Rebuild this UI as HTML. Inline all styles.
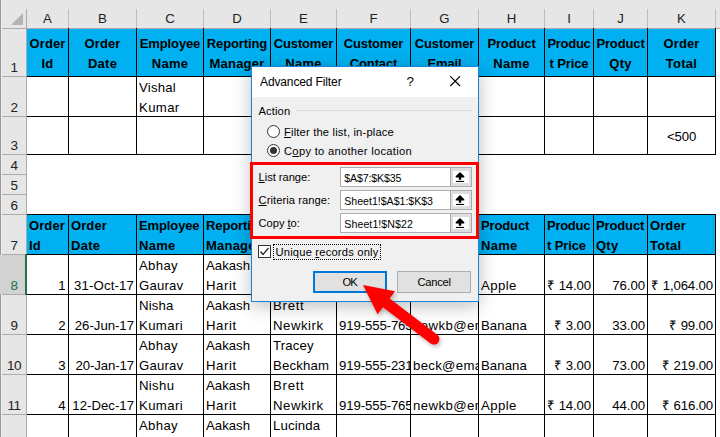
<!DOCTYPE html><html><head><meta charset="utf-8"><title>Advanced Filter</title><style>

html,body{margin:0;padding:0;}
body{width:720px;height:437px;overflow:hidden;background:#fff;position:relative;font-family:"Liberation Sans",sans-serif;font-size:13px;color:#000;}
.abs,.c,.l,.ch,.rh{position:absolute;}
.l{background:#000;}
.c{box-sizing:border-box;overflow:hidden;white-space:nowrap;line-height:20px;font-size:13.2px;}
.c span{position:absolute;left:2px;right:2px;bottom:-2px;display:block;}
.b span{bottom:-1.5px;}
.h1 span{bottom:2px;}
.mid span{bottom:7px;}
.c i{display:block;font-style:normal;}
.b{font-weight:bold;font-size:13px;}
.ctr span{text-align:center;}
.r span{text-align:right;}
.ch{top:8px;height:19px;line-height:21px;text-align:center;font-size:13.2px;color:#222;}
.rh{left:0;width:26px;text-align:center;font-size:13.5px;color:#222;line-height:20px;}
.rh span{position:absolute;left:2px;right:0;bottom:-2px;letter-spacing:-0.4px;}
.g{position:absolute;background:#ababab;}
.gc{background:#bdbdbd;}
.dlg{position:absolute;font-size:12px;color:#000;}
.dlg .t{position:absolute;white-space:nowrap;line-height:14px;}
u{text-decoration:underline;text-underline-offset:1px;}

</style></head><body>
<div class="abs" style="left:0;top:0;width:720px;height:29px;background:#e6e6e6"></div>
<div class="abs" style="left:0;top:0;width:27px;height:437px;background:#e6e6e6"></div>
<div class="abs" style="left:0;top:0;width:1px;height:437px;background:#999999"></div>
<div class="abs" style="left:1px;top:0;width:1px;height:437px;background:#f0f0f0"></div>
<svg class="abs" style="left:11px;top:13px" width="13" height="13"><polygon points="12,0 12,12 0,12" fill="#b4b4b4"/></svg>
<div class="ch" style="left:27px;width:41px">A</div>
<div class="ch" style="left:69px;width:67px">B</div>
<div class="ch" style="left:137px;width:66px">C</div>
<div class="ch" style="left:204px;width:66px">D</div>
<div class="ch" style="left:271px;width:65px">E</div>
<div class="ch" style="left:337px;width:73px">F</div>
<div class="ch" style="left:411px;width:67px">G</div>
<div class="ch" style="left:479px;width:65px">H</div>
<div class="ch" style="left:545px;width:48px">I</div>
<div class="ch" style="left:594px;width:53px">J</div>
<div class="ch" style="left:648px;width:67px">K</div>
<div class="g gc" style="left:26px;top:9px;width:1px;height:19px"></div>
<div class="g gc" style="left:68px;top:9px;width:1px;height:19px"></div>
<div class="g gc" style="left:136px;top:9px;width:1px;height:19px"></div>
<div class="g gc" style="left:203px;top:9px;width:1px;height:19px"></div>
<div class="g gc" style="left:270px;top:9px;width:1px;height:19px"></div>
<div class="g gc" style="left:336px;top:9px;width:1px;height:19px"></div>
<div class="g gc" style="left:410px;top:9px;width:1px;height:19px"></div>
<div class="g gc" style="left:478px;top:9px;width:1px;height:19px"></div>
<div class="g gc" style="left:544px;top:9px;width:1px;height:19px"></div>
<div class="g gc" style="left:593px;top:9px;width:1px;height:19px"></div>
<div class="g gc" style="left:647px;top:9px;width:1px;height:19px"></div>
<div class="g gc" style="left:715px;top:9px;width:1px;height:19px"></div>
<div class="g" style="left:2px;top:28px;width:718px;height:1px"></div>
<div class="rh" style="top:29px;height:47px;"><span>1</span></div>
<div class="g" style="left:2px;top:76px;width:25px;height:1px"></div>
<div class="rh" style="top:77px;height:39px;"><span>2</span></div>
<div class="g" style="left:2px;top:116px;width:25px;height:1px"></div>
<div class="rh" style="top:117px;height:37px;"><span>3</span></div>
<div class="g" style="left:2px;top:154px;width:25px;height:1px"></div>
<div class="rh" style="top:155px;height:19px;"><span>4</span></div>
<div class="g" style="left:2px;top:174px;width:25px;height:1px"></div>
<div class="rh" style="top:175px;height:19px;"><span>5</span></div>
<div class="g" style="left:2px;top:194px;width:25px;height:1px"></div>
<div class="rh" style="top:195px;height:19px;"><span>6</span></div>
<div class="g" style="left:2px;top:214px;width:25px;height:1px"></div>
<div class="rh" style="top:215px;height:39px;"><span>7</span></div>
<div class="g" style="left:2px;top:254px;width:25px;height:1px"></div>
<div class="rh" style="top:255px;height:39px;background:#d2d2d2;color:#217346;"><span>8</span></div>
<div class="g" style="left:2px;top:294px;width:25px;height:1px"></div>
<div class="rh" style="top:295px;height:39px;"><span>9</span></div>
<div class="g" style="left:2px;top:334px;width:25px;height:1px"></div>
<div class="rh" style="top:335px;height:39px;"><span>10</span></div>
<div class="g" style="left:2px;top:374px;width:25px;height:1px"></div>
<div class="rh" style="top:375px;height:39px;"><span>11</span></div>
<div class="g" style="left:2px;top:414px;width:25px;height:1px"></div>
<div class="rh" style="top:415px;height:39px;"><span>12</span></div>
<div class="g" style="left:2px;top:454px;width:25px;height:1px"></div>
<div class="g" style="left:26px;top:9px;width:1px;height:428px"></div>
<div class="abs" style="left:25px;top:254px;width:2px;height:41px;background:#217346"></div>
<div class="c b ctr h1" style="left:27px;top:29px;width:41px;height:47px;background:#00b0f0;"><span><i style="letter-spacing:0.100px">Order</i><i style="letter-spacing:0.260px">Id</i></span></div>
<div class="c b ctr h1" style="left:69px;top:29px;width:67px;height:47px;background:#00b0f0;"><span><i style="letter-spacing:0.100px">Order</i><i style="letter-spacing:0.268px">Date</i></span></div>
<div class="c b ctr h1" style="left:137px;top:29px;width:66px;height:47px;background:#00b0f0;"><span><i style="letter-spacing:-0.119px">Employee</i><i style="letter-spacing:0.275px">Name</i></span></div>
<div class="c b ctr h1" style="left:204px;top:29px;width:66px;height:47px;background:#00b0f0;"><span><i style="letter-spacing:-0.106px">Reporting</i><i style="letter-spacing:0.223px">Manager</i></span></div>
<div class="c b ctr h1" style="left:271px;top:29px;width:65px;height:47px;background:#00b0f0;"><span><i style="letter-spacing:-0.174px">Customer</i><i style="letter-spacing:0.275px">Name</i></span></div>
<div class="c b ctr h1" style="left:337px;top:29px;width:73px;height:47px;background:#00b0f0;"><span><i style="letter-spacing:-0.174px">Customer</i><i style="letter-spacing:-0.145px">Contact</i></span></div>
<div class="c b ctr h1" style="left:411px;top:29px;width:67px;height:47px;background:#00b0f0;"><span><i style="letter-spacing:-0.174px">Customer</i><i style="letter-spacing:-0.170px">Email</i></span></div>
<div class="c b ctr h1" style="left:479px;top:29px;width:65px;height:47px;background:#00b0f0;"><span><i style="letter-spacing:-0.135px">Product</i><i style="letter-spacing:0.275px">Name</i></span></div>
<div class="c b ctr h1" style="left:545px;top:29px;width:48px;height:47px;background:#00b0f0;"><span><i style="letter-spacing:-0.284px">Produc</i><i style="letter-spacing:-0.128px">t Price</i></span></div>
<div class="c b ctr h1" style="left:594px;top:29px;width:53px;height:47px;background:#00b0f0;"><span><i style="letter-spacing:-0.135px">Product</i><i style="letter-spacing:0.242px">Qty</i></span></div>
<div class="c b ctr h1" style="left:648px;top:29px;width:67px;height:47px;background:#00b0f0;"><span><i style="letter-spacing:0.100px">Order</i><i style="letter-spacing:0.257px">Total</i></span></div>
<div class="c " style="left:137px;top:77px;width:66px;height:39px;"><span><i style="letter-spacing:0.196px">Vishal</i><i style="letter-spacing:0.347px">Kumar</i></span></div>
<div class="c ctr mid" style="left:648px;top:117px;width:67px;height:37px;"><span><i style="letter-spacing:-0.126px">&lt;500</i></span></div>
<div class="c b" style="left:27px;top:215px;width:41px;height:39px;background:#00b0f0;"><span><i style="letter-spacing:0.100px">Order</i><i style="letter-spacing:0.260px">Id</i></span></div>
<div class="c b" style="left:69px;top:215px;width:67px;height:39px;background:#00b0f0;"><span><i style="letter-spacing:0.100px">Order</i><i style="letter-spacing:0.268px">Date</i></span></div>
<div class="c b" style="left:137px;top:215px;width:66px;height:39px;background:#00b0f0;"><span><i style="letter-spacing:-0.119px">Employee</i><i style="letter-spacing:0.275px">Name</i></span></div>
<div class="c b" style="left:204px;top:215px;width:66px;height:39px;background:#00b0f0;"><span><i style="letter-spacing:-0.106px">Reporting</i><i style="letter-spacing:0.223px">Manager</i></span></div>
<div class="c b" style="left:271px;top:215px;width:65px;height:39px;background:#00b0f0;"><span><i style="letter-spacing:-0.174px">Customer</i><i style="letter-spacing:0.275px">Name</i></span></div>
<div class="c b" style="left:337px;top:215px;width:73px;height:39px;background:#00b0f0;"><span><i style="letter-spacing:-0.174px">Customer</i><i style="letter-spacing:-0.145px">Contact</i></span></div>
<div class="c b" style="left:411px;top:215px;width:67px;height:39px;background:#00b0f0;"><span><i style="letter-spacing:-0.174px">Customer</i><i style="letter-spacing:-0.170px">Email</i></span></div>
<div class="c b" style="left:479px;top:215px;width:65px;height:39px;background:#00b0f0;"><span><i style="letter-spacing:-0.135px">Product</i><i style="letter-spacing:0.275px">Name</i></span></div>
<div class="c b" style="left:545px;top:215px;width:48px;height:39px;background:#00b0f0;"><span><i style="letter-spacing:-0.284px">Produc</i><i style="letter-spacing:-0.128px">t Price</i></span></div>
<div class="c b" style="left:594px;top:215px;width:53px;height:39px;background:#00b0f0;"><span><i style="letter-spacing:-0.135px">Product</i><i style="letter-spacing:0.242px">Qty</i></span></div>
<div class="c b" style="left:648px;top:215px;width:67px;height:39px;background:#00b0f0;"><span><i style="letter-spacing:0.100px">Order</i><i style="letter-spacing:0.257px">Total</i></span></div>
<div class="c r" style="left:27px;top:255px;width:41px;height:39px;"><span><i style="letter-spacing:0.456px">1</i></span></div>
<div class="c r" style="left:69px;top:255px;width:67px;height:39px;"><span><i style="letter-spacing:0.145px">31-Oct-17</i></span></div>
<div class="c " style="left:137px;top:255px;width:66px;height:39px;"><span><i style="letter-spacing:0.306px">Abhay</i><i style="letter-spacing:0.158px">Gaurav</i></span></div>
<div class="c " style="left:204px;top:255px;width:66px;height:39px;"><span><i style="letter-spacing:0.016px">Aakash</i><i style="letter-spacing:0.592px">Harit</i></span></div>
<div class="c " style="left:271px;top:255px;width:65px;height:39px;"><span><i style="letter-spacing:0.167px">Lucinda</i><i style="letter-spacing:0.177px">George</i></span></div>
<div class="c " style="left:337px;top:255px;width:73px;height:39px;"><span><i style="letter-spacing:-0.112px">919-555-8765</i></span></div>
<div class="c " style="left:411px;top:255px;width:67px;height:39px;"><span><i style="letter-spacing:0.308px">lgeorge@email.com</i></span></div>
<div class="c " style="left:479px;top:255px;width:65px;height:39px;"><span><i style="letter-spacing:0.431px">Apple</i></span></div>
<div class="c r" style="left:545px;top:255px;width:48px;height:39px;"><span><i style="letter-spacing:-0.137px">₹ 14.00</i></span></div>
<div class="c r" style="left:594px;top:255px;width:53px;height:39px;"><span><i style="letter-spacing:-0.043px">76.00</i></span></div>
<div class="c r" style="left:648px;top:255px;width:67px;height:39px;"><span><i style="letter-spacing:-0.129px">₹ 1,064.00</i></span></div>
<div class="c r" style="left:27px;top:295px;width:41px;height:39px;"><span><i style="letter-spacing:0.456px">2</i></span></div>
<div class="c r" style="left:69px;top:295px;width:67px;height:39px;"><span><i style="letter-spacing:-0.022px">26-Jun-17</i></span></div>
<div class="c " style="left:137px;top:295px;width:66px;height:39px;"><span><i style="letter-spacing:0.178px">Nisha</i><i style="letter-spacing:0.369px">Kumari</i></span></div>
<div class="c " style="left:204px;top:295px;width:66px;height:39px;"><span><i style="letter-spacing:0.016px">Aakash</i><i style="letter-spacing:0.592px">Harit</i></span></div>
<div class="c " style="left:271px;top:295px;width:65px;height:39px;"><span><i style="letter-spacing:0.723px">Brett</i><i style="letter-spacing:0.531px">Newkirk</i></span></div>
<div class="c " style="left:337px;top:295px;width:73px;height:39px;"><span><i style="letter-spacing:-0.112px">919-555-7653</i></span></div>
<div class="c " style="left:411px;top:295px;width:67px;height:39px;"><span><i style="letter-spacing:0.419px">newkb@email.com</i></span></div>
<div class="c " style="left:479px;top:295px;width:65px;height:39px;"><span><i style="letter-spacing:0.079px">Banana</i></span></div>
<div class="c r" style="left:545px;top:295px;width:48px;height:39px;"><span><i style="letter-spacing:-0.105px">₹ 3.00</i></span></div>
<div class="c r" style="left:594px;top:295px;width:53px;height:39px;"><span><i style="letter-spacing:-0.043px">33.00</i></span></div>
<div class="c r" style="left:648px;top:295px;width:67px;height:39px;"><span><i style="letter-spacing:-0.137px">₹ 99.00</i></span></div>
<div class="c r" style="left:27px;top:335px;width:41px;height:39px;"><span><i style="letter-spacing:0.456px">3</i></span></div>
<div class="c r" style="left:69px;top:335px;width:67px;height:39px;"><span><i style="letter-spacing:-0.099px">20-Jan-17</i></span></div>
<div class="c " style="left:137px;top:335px;width:66px;height:39px;"><span><i style="letter-spacing:0.306px">Abhay</i><i style="letter-spacing:0.158px">Gaurav</i></span></div>
<div class="c " style="left:204px;top:335px;width:66px;height:39px;"><span><i style="letter-spacing:0.016px">Aakash</i><i style="letter-spacing:0.592px">Harit</i></span></div>
<div class="c " style="left:271px;top:335px;width:65px;height:39px;"><span><i style="letter-spacing:0.166px">Tracey</i><i style="letter-spacing:0.177px">Beckham</i></span></div>
<div class="c " style="left:337px;top:335px;width:73px;height:39px;"><span><i style="letter-spacing:-0.112px">919-555-2314</i></span></div>
<div class="c " style="left:411px;top:335px;width:67px;height:39px;"><span><i style="letter-spacing:0.313px">beck@email.com</i></span></div>
<div class="c " style="left:479px;top:335px;width:65px;height:39px;"><span><i style="letter-spacing:0.079px">Banana</i></span></div>
<div class="c r" style="left:545px;top:335px;width:48px;height:39px;"><span><i style="letter-spacing:-0.105px">₹ 3.00</i></span></div>
<div class="c r" style="left:594px;top:335px;width:53px;height:39px;"><span><i style="letter-spacing:-0.043px">73.00</i></span></div>
<div class="c r" style="left:648px;top:335px;width:67px;height:39px;"><span><i style="letter-spacing:-0.161px">₹ 219.00</i></span></div>
<div class="c r" style="left:27px;top:375px;width:41px;height:39px;"><span><i style="letter-spacing:0.456px">4</i></span></div>
<div class="c r" style="left:69px;top:375px;width:67px;height:39px;"><span><i style="letter-spacing:0.010px">12-Dec-17</i></span></div>
<div class="c " style="left:137px;top:375px;width:66px;height:39px;"><span><i style="letter-spacing:0.316px">Nishu</i><i style="letter-spacing:0.369px">Kumari</i></span></div>
<div class="c " style="left:204px;top:375px;width:66px;height:39px;"><span><i style="letter-spacing:0.016px">Aakash</i><i style="letter-spacing:0.592px">Harit</i></span></div>
<div class="c " style="left:271px;top:375px;width:65px;height:39px;"><span><i style="letter-spacing:0.723px">Brett</i><i style="letter-spacing:0.531px">Newkirk</i></span></div>
<div class="c " style="left:337px;top:375px;width:73px;height:39px;"><span><i style="letter-spacing:-0.112px">919-555-7653</i></span></div>
<div class="c " style="left:411px;top:375px;width:67px;height:39px;"><span><i style="letter-spacing:0.419px">newkb@email.com</i></span></div>
<div class="c " style="left:479px;top:375px;width:65px;height:39px;"><span><i style="letter-spacing:0.431px">Apple</i></span></div>
<div class="c r" style="left:545px;top:375px;width:48px;height:39px;"><span><i style="letter-spacing:-0.137px">₹ 14.00</i></span></div>
<div class="c r" style="left:594px;top:375px;width:53px;height:39px;"><span><i style="letter-spacing:-0.043px">44.00</i></span></div>
<div class="c r" style="left:648px;top:375px;width:67px;height:39px;"><span><i style="letter-spacing:-0.161px">₹ 616.00</i></span></div>
<div class="c r" style="left:27px;top:415px;width:41px;height:39px;"><span><i style="letter-spacing:0.456px">5</i></span></div>
<div class="c r" style="left:69px;top:415px;width:67px;height:39px;"><span><i style="letter-spacing:0.335px">13-Mar-17</i></span></div>
<div class="c " style="left:137px;top:415px;width:66px;height:39px;"><span><i style="letter-spacing:0.306px">Abhay</i><i style="letter-spacing:0.158px">Gaurav</i></span></div>
<div class="c " style="left:204px;top:415px;width:66px;height:39px;"><span><i style="letter-spacing:0.016px">Aakash</i><i style="letter-spacing:0.592px">Harit</i></span></div>
<div class="c " style="left:271px;top:415px;width:65px;height:39px;"><span><i style="letter-spacing:0.167px">Lucinda</i><i style="letter-spacing:0.177px">George</i></span></div>
<div class="c " style="left:337px;top:415px;width:73px;height:39px;"><span><i style="letter-spacing:-0.112px">919-555-8765</i></span></div>
<div class="c " style="left:411px;top:415px;width:67px;height:39px;"><span><i style="letter-spacing:0.308px">lgeorge@email.com</i></span></div>
<div class="c " style="left:479px;top:415px;width:65px;height:39px;"><span><i style="letter-spacing:0.204px">Orange</i></span></div>
<div class="c r" style="left:545px;top:415px;width:48px;height:39px;"><span><i style="letter-spacing:-0.105px">₹ 5.00</i></span></div>
<div class="c r" style="left:594px;top:415px;width:53px;height:39px;"><span><i style="letter-spacing:-0.043px">60.00</i></span></div>
<div class="c r" style="left:648px;top:415px;width:67px;height:39px;"><span><i style="letter-spacing:-0.161px">₹ 300.00</i></span></div>
<div class="l" style="left:27px;top:76px;width:689px;height:1px"></div>
<div class="l" style="left:27px;top:116px;width:689px;height:1px"></div>
<div class="l" style="left:27px;top:154px;width:689px;height:1px"></div>
<div class="l" style="left:68px;top:28px;width:1px;height:127px"></div>
<div class="l" style="left:136px;top:28px;width:1px;height:127px"></div>
<div class="l" style="left:203px;top:28px;width:1px;height:127px"></div>
<div class="l" style="left:270px;top:28px;width:1px;height:127px"></div>
<div class="l" style="left:336px;top:28px;width:1px;height:127px"></div>
<div class="l" style="left:410px;top:28px;width:1px;height:127px"></div>
<div class="l" style="left:478px;top:28px;width:1px;height:127px"></div>
<div class="l" style="left:544px;top:28px;width:1px;height:127px"></div>
<div class="l" style="left:593px;top:28px;width:1px;height:127px"></div>
<div class="l" style="left:647px;top:28px;width:1px;height:127px"></div>
<div class="l" style="left:715px;top:28px;width:1px;height:127px"></div>
<div class="l" style="left:27px;top:214px;width:689px;height:1px"></div>
<div class="l" style="left:27px;top:254px;width:689px;height:1px"></div>
<div class="l" style="left:27px;top:294px;width:689px;height:1px"></div>
<div class="l" style="left:27px;top:334px;width:689px;height:1px"></div>
<div class="l" style="left:27px;top:374px;width:689px;height:1px"></div>
<div class="l" style="left:27px;top:414px;width:689px;height:1px"></div>
<div class="l" style="left:68px;top:214px;width:1px;height:223px"></div>
<div class="l" style="left:136px;top:214px;width:1px;height:223px"></div>
<div class="l" style="left:203px;top:214px;width:1px;height:223px"></div>
<div class="l" style="left:270px;top:214px;width:1px;height:223px"></div>
<div class="l" style="left:336px;top:214px;width:1px;height:223px"></div>
<div class="l" style="left:410px;top:214px;width:1px;height:223px"></div>
<div class="l" style="left:478px;top:214px;width:1px;height:223px"></div>
<div class="l" style="left:544px;top:214px;width:1px;height:223px"></div>
<div class="l" style="left:593px;top:214px;width:1px;height:223px"></div>
<div class="l" style="left:647px;top:214px;width:1px;height:223px"></div>
<div class="l" style="left:715px;top:214px;width:1px;height:223px"></div>
<div class="dlg" style="left:251px;top:66px;width:228px;height:236px;box-sizing:border-box;border:1px solid #1883d7;background:#f0f0f0;box-shadow:0 4px 17px rgba(0,0,0,0.26)">
<div class="abs" style="left:0;top:0;width:226px;height:30px;background:#fff"></div>
<div class="t" style="left:8.00px;top:8.00px;font-size:12px;letter-spacing:-0.125px;">Advanced Filter</div>
<div class="t" style="left:154.60px;top:8.00px;font-size:13.5px;">?</div>
<svg class="abs" style="left:198px;top:9px" width="12" height="12"><path d="M0.3 0.3L10 10M10 0.3L0.3 10" stroke="#000" stroke-width="1.15" fill="none"/></svg>
<div class="t" style="left:6.50px;top:37.00px;font-size:11.2px;letter-spacing:0.118px;">Action</div>
<div class="abs" style="left:44px;top:43px;width:176px;height:1px;background:#dcdcdc"></div>
<div class="abs" style="left:15px;top:58px;width:13px;height:13px;box-sizing:border-box;border:1px solid #333;border-radius:50%;background:#fff"></div>
<div class="abs" style="left:15px;top:77px;width:13px;height:13px;box-sizing:border-box;border:1px solid #333;border-radius:50%;background:#fff"></div>
<div class="abs" style="left:18px;top:80px;width:7px;height:7px;border-radius:50%;background:#333"></div>
<div class="t" style="left:32.00px;top:58.00px;font-size:11.2px;letter-spacing:0.171px;"><u>F</u>ilter the list, in-place</div>
<div class="t" style="left:32.00px;top:77.00px;font-size:11.2px;letter-spacing:0.279px;">C<u>o</u>py to another location</div>
<div class="t" style="left:6.50px;top:103.00px;font-size:11.2px;letter-spacing:-0.042px;"><u>L</u>ist range:</div>
<div class="t" style="left:6.50px;top:126.00px;font-size:11.2px;letter-spacing:0.060px;"><u>C</u>riteria range:</div>
<div class="t" style="left:6.50px;top:148.80px;font-size:11.2px;letter-spacing:-0.048px;">Copy <u>t</u>o:</div>
<div class="abs" style="left:88px;top:100px;width:132px;height:20px;box-sizing:border-box;border:1px solid #abadb3;background:#fff"></div>
<div class="abs" style="left:198px;top:100px;width:22px;height:20px;box-sizing:border-box;border:1px solid #a9abb0;background:#dedede"></div>
<div class="abs" style="left:201px;top:103.5px;width:15.5px;height:12.5px;background:#fff"></div>
<svg class="abs" style="left:203px;top:105px" width="10" height="11"><path d="M5 0L9.3 4.2V5.4H6.2V7.8H3.8V5.4H0.7V4.2Z" fill="#000"/><rect x="0.9" y="8.9" width="8.2" height="1.1" fill="#000"/></svg>
<div class="t" style="left:92.30px;top:103.50px;font-size:10.6px;letter-spacing:-0.133px;">$A$7:$K$35</div>
<div class="abs" style="left:88px;top:123px;width:132px;height:20px;box-sizing:border-box;border:1px solid #abadb3;background:#fff"></div>
<div class="abs" style="left:198px;top:123px;width:22px;height:20px;box-sizing:border-box;border:1px solid #a9abb0;background:#dedede"></div>
<div class="abs" style="left:201px;top:126.5px;width:15.5px;height:12.5px;background:#fff"></div>
<svg class="abs" style="left:203px;top:128px" width="10" height="11"><path d="M5 0L9.3 4.2V5.4H6.2V7.8H3.8V5.4H0.7V4.2Z" fill="#000"/><rect x="0.9" y="8.9" width="8.2" height="1.1" fill="#000"/></svg>
<div class="t" style="left:92.30px;top:126.50px;font-size:10.6px;letter-spacing:-0.016px;">Sheet1!$A$1:$K$3</div>
<div class="abs" style="left:88px;top:146px;width:132px;height:20px;box-sizing:border-box;border:1px solid #abadb3;background:#fff"></div>
<div class="abs" style="left:198px;top:146px;width:22px;height:20px;box-sizing:border-box;border:1px solid #a9abb0;background:#dedede"></div>
<div class="abs" style="left:201px;top:149.5px;width:15.5px;height:12.5px;background:#fff"></div>
<svg class="abs" style="left:203px;top:151px" width="10" height="11"><path d="M5 0L9.3 4.2V5.4H6.2V7.8H3.8V5.4H0.7V4.2Z" fill="#000"/><rect x="0.9" y="8.9" width="8.2" height="1.1" fill="#000"/></svg>
<div class="t" style="left:92.30px;top:149.50px;font-size:10.6px;letter-spacing:0.079px;">Sheet1!$N$22</div>
<div class="abs" style="left:6px;top:178px;width:13px;height:13px;box-sizing:border-box;border:1px solid #333;background:#fff"></div>
<svg class="abs" style="left:6px;top:178px" width="13" height="13"><path d="M2.5 6.5L5 9.5L10.5 3" stroke="#222" stroke-width="1.2" fill="none"/></svg>
<div class="abs" style="left:21px;top:177px;width:108px;height:16px;box-sizing:border-box;border:1px dotted #000"></div>
<div class="t" style="left:23.50px;top:178.00px;font-size:11.2px;letter-spacing:0.183px;">Unique <u>r</u>ecords only</div>
<div class="abs" style="left:61px;top:204px;width:74px;height:22px;box-sizing:border-box;border:2px solid #0078d7;background:#e1e1e1"></div>
<div class="abs" style="left:145px;top:204px;width:74px;height:22px;box-sizing:border-box;border:1px solid #adadad;background:#e1e1e1"></div>
<div class="t" style="left:90.50px;top:207.50px;font-size:11.2px;letter-spacing:-0.836px;">OK</div>
<div class="t" style="left:165.50px;top:207.50px;font-size:11.2px;letter-spacing:-0.255px;">Cancel</div>
</div>
<div class="abs" style="left:250px;top:162px;width:229px;height:77px;box-sizing:border-box;border:3px solid #ff0000"></div>
<svg class="abs" style="left:340px;top:270px;overflow:visible" width="120" height="90" viewBox="340 270 120 90">
<defs><filter id="sh" x="-20%" y="-20%" width="150%" height="150%"><feGaussianBlur stdDeviation="2"/></filter></defs>
<g transform="translate(1.5,2.5)" opacity="0.25" filter="url(#sh)"><path d="M363.00 285.00L395.06 291.26L389.64 298.38L437.29 334.68A5.50 5.50 0 0 1 430.62 343.43L382.97 307.13L377.55 314.25Z" fill="#000"/></g>
<path d="M363.00 285.00L395.06 291.26L389.64 298.38L437.29 334.68A5.50 5.50 0 0 1 430.62 343.43L382.97 307.13L377.55 314.25Z" fill="#fe0000"/>
</svg>
</body></html>
